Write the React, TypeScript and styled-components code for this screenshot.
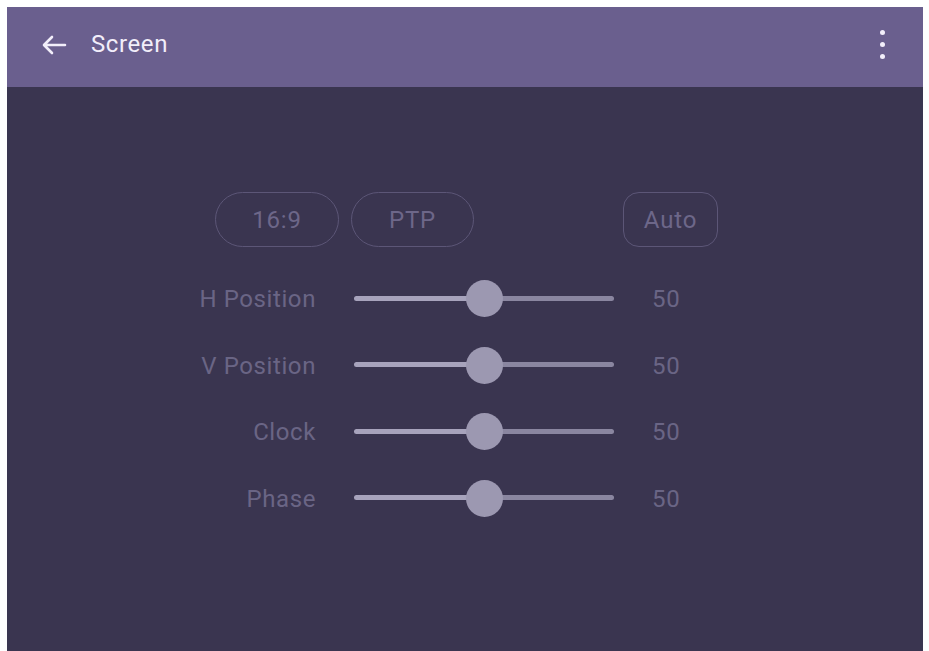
import React from 'react';
import styled, { createGlobalStyle } from 'styled-components';

const GlobalStyle = createGlobalStyle`
  html, body {
    margin: 0;
    padding: 0;
    background: #ffffff;
    font-family: Roboto, 'Liberation Sans', sans-serif;
  }
`;

const Frame = styled.div`
  margin: 7px 6px 0 7px;
  height: 644px;
  display: flex;
  flex-direction: column;
  background: #3a3550;
  overflow: hidden;
`;

const Toolbar = styled.div`
  height: 80px;
  flex-shrink: 0;
  display: flex;
  align-items: center;
  padding: 0 32px 0 32px;
  background: #6a5f8e;
  color: #f2eefa;
`;

const BackButton = styled.div`
  width: 30px;
  height: 30px;
  display: flex;
  align-items: center;
  justify-content: center;
  margin-right: 22px;
  margin-top: -4px;
`;

const Title = styled.div`
  font-size: 24px;
  letter-spacing: 0.6px;
  flex: 1;
  margin-top: -6px;
`;

const MenuButton = styled.div`
  display: flex;
  flex-direction: column;
  gap: 7px;
  margin-top: -6px;
  margin-right: 6px;
`;

const Dot = styled.span`
  width: 5px;
  height: 5px;
  border-radius: 50%;
  background: #f2eefa;
`;

const Body = styled.div`
  flex: 1;
  padding-top: 105px;
`;

const ModeRow = styled.div`
  display: flex;
  padding-left: 208px;
  height: 55px;
  margin-bottom: 18px;
`;

const ModeButton = styled.div<{ $w: number; $radius: number; $gapBefore?: number }>`
  width: ${p => p.$w}px;
  height: 100%;
  box-sizing: border-box;
  border: 1.5px solid #5c5677;
  border-radius: ${p => p.$radius}px;
  margin-left: ${p => p.$gapBefore ?? 0}px;
  display: flex;
  align-items: center;
  justify-content: center;
  color: #6d6789;
  font-size: 24px;
  letter-spacing: 0.8px;
`;

const SliderGrid = styled.div`
  display: grid;
  grid-template-columns: 136px 260px 60px;
  column-gap: 38px;
  grid-auto-rows: 66.5px;
  padding-left: 173px;
`;

const Label = styled.div`
  display: flex;
  align-items: center;
  justify-content: flex-end;
  color: #6a6585;
  font-size: 24px;
  letter-spacing: 0.6px;
  padding-top: 2px;
`;

const Value = styled.div`
  display: flex;
  align-items: center;
  color: #6a6585;
  font-size: 24px;
  letter-spacing: 0.8px;
  padding-top: 2px;
`;

const Track = styled.div`
  position: relative;
  display: flex;
  align-items: center;
`;

const Rail = styled.div`
  flex: 1;
  height: 5px;
  border-radius: 3px;
  background: linear-gradient(to right, #a7a3bc 0 50%, #8a86a0 50% 100%);
`;

const Thumb = styled.div`
  position: absolute;
  top: 50%;
  width: 37px;
  height: 37px;
  margin-left: -18px;
  margin-top: -18px;
  border-radius: 50%;
  background: #9c98b1;
`;

const sliders = [
  { label: 'H Position', value: 50 },
  { label: 'V Position', value: 50 },
  { label: 'Clock', value: 50 },
  { label: 'Phase', value: 50 },
];

const Slider: React.FC<{ value: number }> = ({ value }) => (
  <Track>
    <Rail />
    <Thumb style={{ left: `${value}%` }} />
  </Track>
);

export default function App() {
  return (
    <>
      <GlobalStyle />
      <Frame>
        <Toolbar>
          <BackButton>
            <svg width="26" height="22" viewBox="0 0 26 22" fill="none">
              <path d="M24 11H4M11 3L3 11l8 8" stroke="#f2eefa" strokeWidth="2.6" strokeLinecap="round" strokeLinejoin="round" />
            </svg>
          </BackButton>
          <Title>Screen</Title>
          <MenuButton>
            <Dot />
            <Dot />
            <Dot />
          </MenuButton>
        </Toolbar>
        <Body>
          <ModeRow>
            <ModeButton $w={124} $radius={28}>16:9</ModeButton>
            <ModeButton $w={123} $radius={28} $gapBefore={12}>PTP</ModeButton>
            <ModeButton $w={95} $radius={16} $gapBefore={149}>Auto</ModeButton>
          </ModeRow>
          <SliderGrid>
            {sliders.map(s => (
              <React.Fragment key={s.label}>
                <Label>{s.label}</Label>
                <Slider value={s.value} />
                <Value>{s.value}</Value>
              </React.Fragment>
            ))}
          </SliderGrid>
        </Body>
      </Frame>
    </>
  );
}
